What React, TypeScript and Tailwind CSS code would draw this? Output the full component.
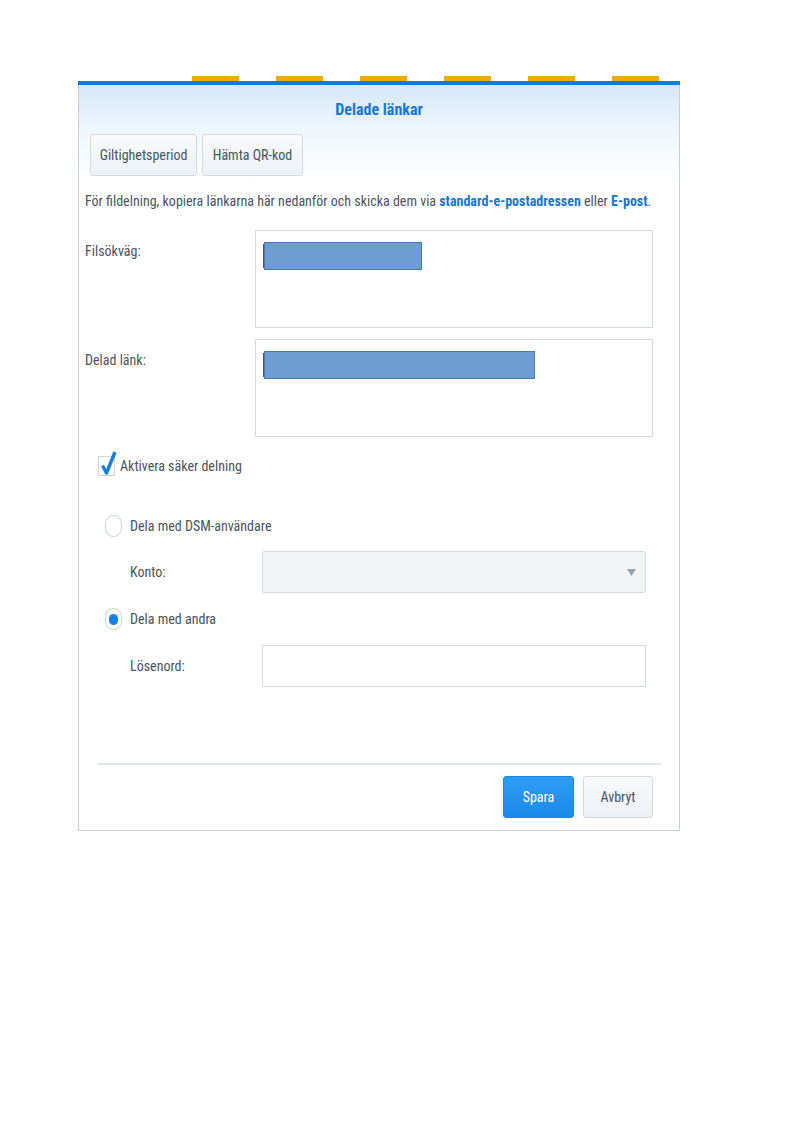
import React from 'react'

const font = "font-['Roboto_Condensed','Open_Sans',sans-serif]"

function Radio({ checked }: { checked?: boolean }) {
  return (
    <span className="flex h-[22px] w-[17px] shrink-0 items-center justify-center rounded-full border border-[#c9cfd6] bg-white">
      {checked && <span className="h-[11px] w-[9px] rounded-full bg-[#1a82e2]" />}
    </span>
  )
}

function Field({ label, barWidth }: { label: string; barWidth: number }) {
  return (
    <div className="flex items-start">
      <div className="w-[176px] pl-[6px] pt-[12px] text-[14px] leading-[18px] text-[#4b545e]">{label}</div>
      <div className="h-[98px] w-[398px] border border-[#d3d9df] bg-white pl-[7px] pt-[11px]">
        <div className="flex items-center">
          <span className="h-[24px] w-px bg-[#555]" />
          <span className="block h-[28px] border border-[#4a78b0] bg-[#6e9dd1]" style={{ width: barWidth }} />
        </div>
      </div>
    </div>
  )
}

export default function App() {
  return (
    <div className={`min-h-[1123px] w-[794px] bg-white ${font}`}>
      <div className="h-[76px]" />
      <div className="ml-[78px] w-[602px]">
        {/* background window tabs peeking above the dialog */}
        <div className="flex h-[5px] gap-[37px] pl-[114px]">
          {[0, 1, 2, 3, 4, 5].map((i) => (
            <span key={i} className="h-[5px] w-[47px] bg-[#f2a900]" />
          ))}
        </div>
        <div className="border-t-4 border-[#0b7fe1] bg-white">
          <div className="border-x border-b border-[#c7cdd3]">
            <div className="bg-gradient-to-b from-[#d6e8f8] via-[#f1f7fd] to-white pb-[6px]">
              <h1 className="pt-[15px] text-center text-[16px] font-bold leading-[20px] text-[#1577d1]">Delade länkar</h1>
              <div className="mt-[14px] flex gap-[5px] pl-[11px]">
                <button className="h-[42px] w-[107px] rounded-[3px] border border-[#d3d9e0] bg-gradient-to-b from-[#f8fafc] to-[#edf1f5] text-[14px] text-[#4b545e]">
                  Giltighetsperiod
                </button>
                <button className="h-[42px] w-[101px] rounded-[3px] border border-[#d3d9e0] bg-gradient-to-b from-[#f8fafc] to-[#edf1f5] text-[14px] text-[#4b545e]">
                  Hämta QR-kod
                </button>
              </div>
            </div>

            <p className="mt-[10px] whitespace-nowrap pl-[6px] text-[14px] leading-[18px] text-[#4b545e]">
              För fildelning, kopiera länkarna här nedanför och skicka dem via{' '}
              <span className="font-bold text-[#1577d1]">standard-e-postadressen</span> eller{' '}
              <span className="font-bold text-[#1577d1]">E-post</span>.
            </p>

            <div className="mt-[20px] flex flex-col gap-[11px]">
              <Field label="Filsökväg:" barWidth={158} />
              <Field label="Delad länk:" barWidth={271} />
            </div>

            <label className="mt-[19px] flex items-center gap-[5px] pl-[19px]">
              <span className="relative h-[20px] w-[17px] border border-[#cfd5db] bg-white">
                <svg className="absolute -top-[7px] left-[1px]" width="17" height="26" viewBox="0 0 17 26">
                  <path d="M2.5 15.5 L6.5 23 L15 2" fill="none" stroke="#1a7fdc" strokeWidth="3.4" strokeLinejoin="round" />
                </svg>
              </span>
              <span className="text-[14px] leading-[18px] text-[#4b545e]">Aktivera säker delning</span>
            </label>

            <div className="mt-[39px] flex items-center gap-[8px] pl-[26px]">
              <Radio />
              <span className="text-[14px] leading-[18px] text-[#4b545e]">Dela med DSM-användare</span>
            </div>

            <div className="mt-[14px] flex items-center pl-[51px]">
              <span className="w-[132px] text-[14px] leading-[18px] text-[#4b545e]">Konto:</span>
              <div className="flex h-[42px] w-[384px] items-center justify-end rounded-[2px] border border-[#d3d9df] bg-[#f1f4f7] pr-[9px]">
                <svg width="9" height="7" viewBox="0 0 9 7">
                  <path d="M0 0 H9 L4.5 7 Z" fill="#9aa3ab" />
                </svg>
              </div>
            </div>

            <div className="mt-[15px] flex items-center gap-[8px] pl-[26px]">
              <Radio checked />
              <span className="text-[14px] leading-[18px] text-[#4b545e]">Dela med andra</span>
            </div>

            <div className="mt-[15px] flex items-center pl-[51px]">
              <span className="w-[132px] text-[14px] leading-[18px] text-[#4b545e]">Lösenord:</span>
              <div className="h-[42px] w-[384px] border border-[#d3d9df] bg-white" />
            </div>

            <div className="mx-[18px] mt-[76px] h-[2px] bg-[#e2e6ea]" />

            <div className="flex justify-end gap-[9px] pb-[12px] pr-[26px] pt-[11px]">
              <button className="h-[42px] w-[71px] rounded-[3px] border border-[#1a85e0] bg-gradient-to-b from-[#2f9cf4] to-[#1b8ae8] text-[14px] text-white">
                Spara
              </button>
              <button className="h-[42px] w-[70px] rounded-[3px] border border-[#d3d9e0] bg-gradient-to-b from-[#f8fafc] to-[#edf1f5] text-[14px] text-[#4b545e]">
                Avbryt
              </button>
            </div>
          </div>
        </div>
      </div>
    </div>
  )
}
